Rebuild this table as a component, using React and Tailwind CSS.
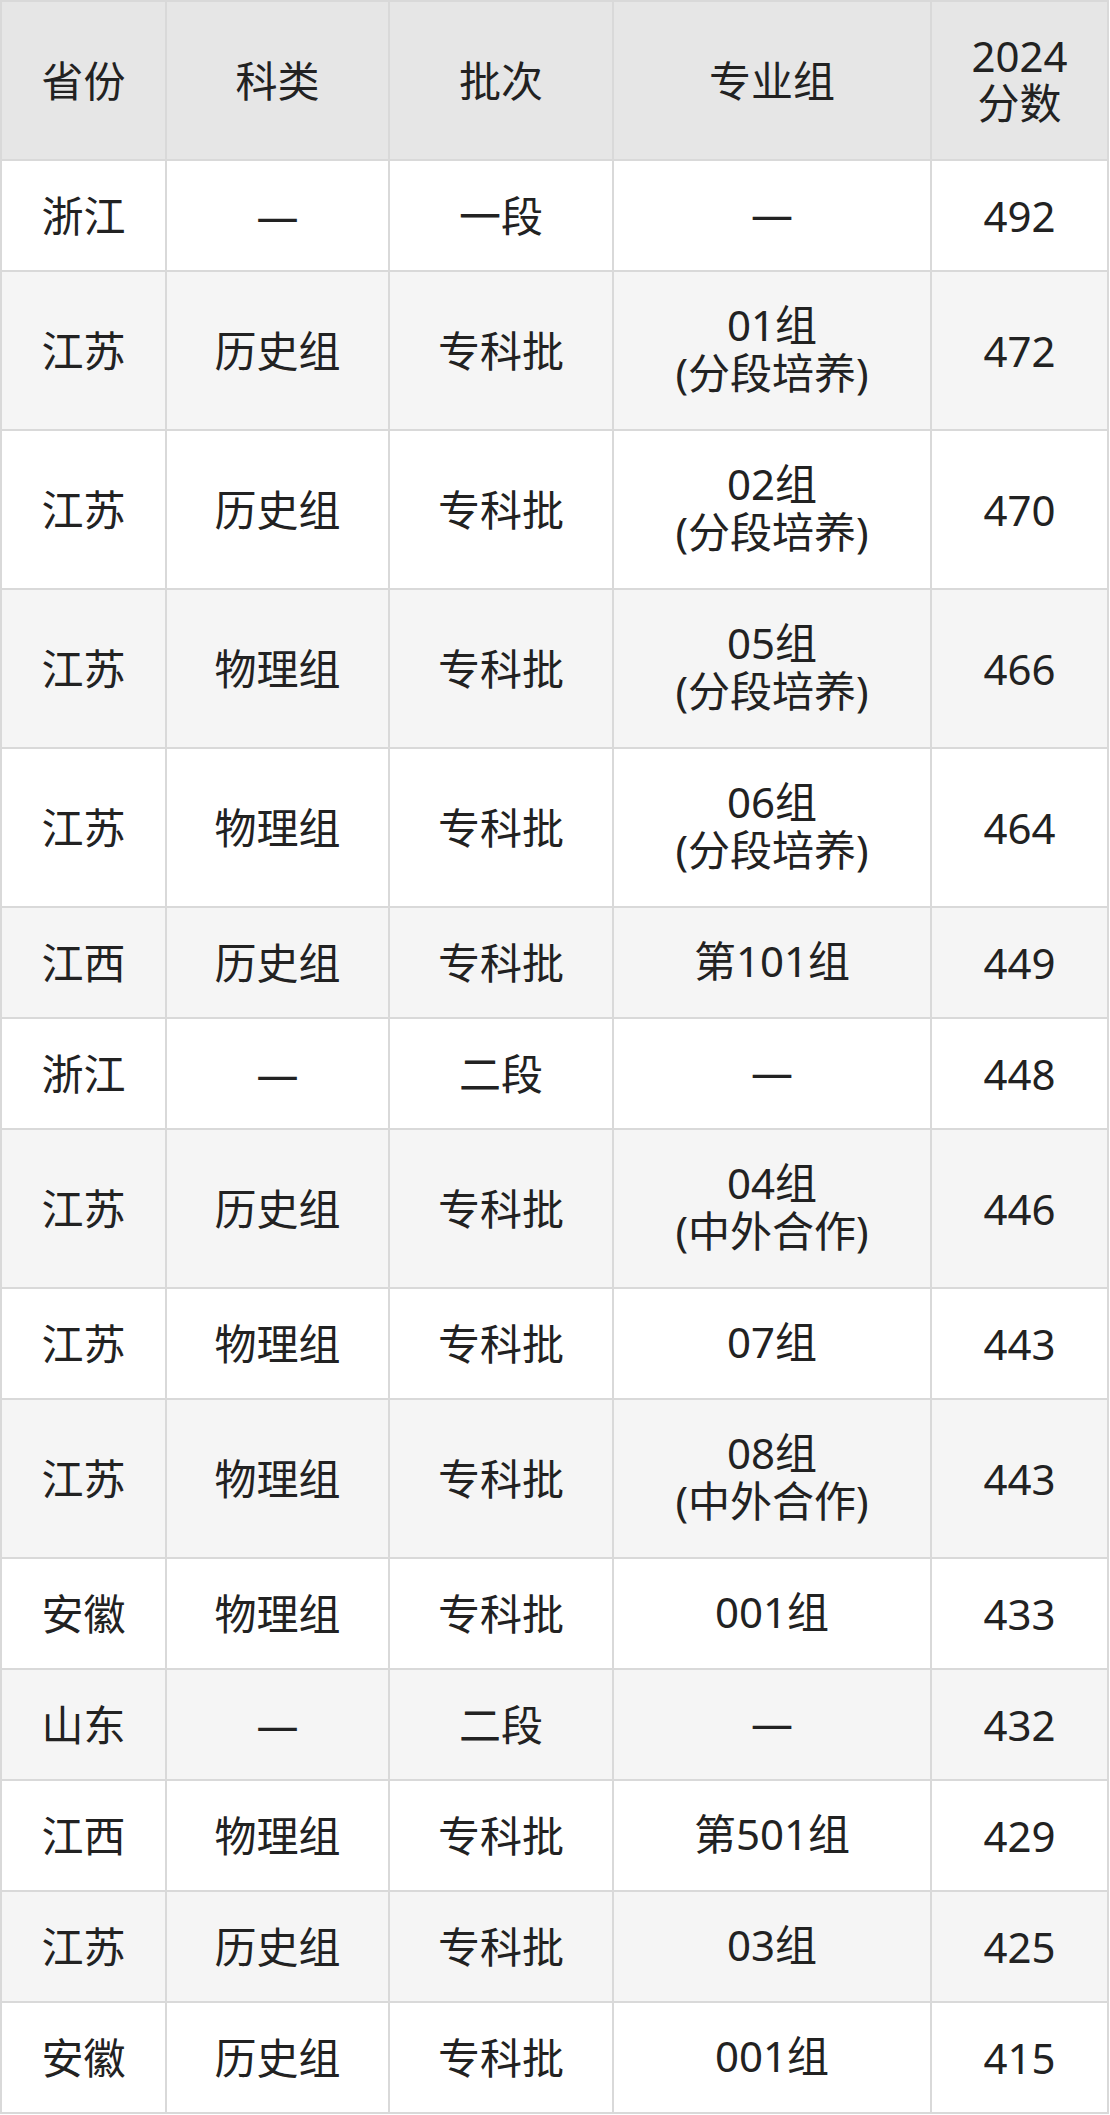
import React from 'react';

const rows = [
  ['浙江', '—', '一段', ['—'], '492'],
  ['江苏', '历史组', '专科批', ['01组', '(分段培养)'], '472'],
  ['江苏', '历史组', '专科批', ['02组', '(分段培养)'], '470'],
  ['江苏', '物理组', '专科批', ['05组', '(分段培养)'], '466'],
  ['江苏', '物理组', '专科批', ['06组', '(分段培养)'], '464'],
  ['江西', '历史组', '专科批', ['第101组'], '449'],
  ['浙江', '—', '二段', ['—'], '448'],
  ['江苏', '历史组', '专科批', ['04组', '(中外合作)'], '446'],
  ['江苏', '物理组', '专科批', ['07组'], '443'],
  ['江苏', '物理组', '专科批', ['08组', '(中外合作)'], '443'],
  ['安徽', '物理组', '专科批', ['001组'], '433'],
  ['山东', '—', '二段', ['—'], '432'],
  ['江西', '物理组', '专科批', ['第501组'], '429'],
  ['江苏', '历史组', '专科批', ['03组'], '425'],
  ['安徽', '历史组', '专科批', ['001组'], '415'],
];

const Cell = ({ bg, h, children }) => (
  <div className={`${bg} ${h} flex flex-col items-center justify-center text-center leading-[46px]`}>
    {children}
  </div>
);

export default function App() {
  return (
    <div className="w-[1110px] bg-white text-[#222] text-[42px] font-['Noto_Sans','Noto_Sans_CJK_SC',sans-serif]">
      <div className="w-[1109px] grid grid-cols-[163px_221px_222px_316px_175px] gap-[2px] p-[2px] bg-[#d9d9d9]">
        {['省份', '科类', '批次', '专业组'].map((t) => (
          <Cell key={t} bg="bg-[#e6e6e6]" h="h-[157px]">{t}</Cell>
        ))}
        <Cell bg="bg-[#e6e6e6]" h="h-[157px]">
          <span className="h-[47px] leading-[44px]">2024</span>
          <span className="h-[47px] leading-[44px]">分数</span>
        </Cell>
        {rows.map((r, i) => {
          const bg = i % 2 === 0 ? 'bg-white' : 'bg-[#f5f5f5]';
          const h = r[3].length > 1 ? 'h-[157px]' : 'h-[109px]';
          return (
            <React.Fragment key={i}>
              <Cell bg={bg} h={h}>{r[0]}</Cell>
              <Cell bg={bg} h={h}>{r[1]}</Cell>
              <Cell bg={bg} h={h}>{r[2]}</Cell>
              <Cell bg={bg} h={h}>
                {r[3].map((l) => (
                  <span key={l} className="h-[48px] leading-[44px]">{l}</span>
                ))}
              </Cell>
              <Cell bg={bg} h={h}>{r[4]}</Cell>
            </React.Fragment>
          );
        })}
      </div>
    </div>
  );
}
